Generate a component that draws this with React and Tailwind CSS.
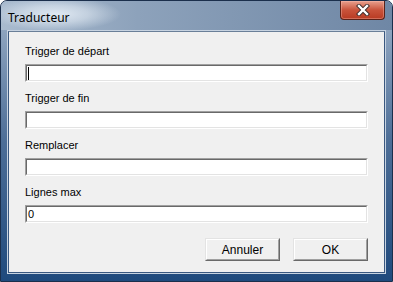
const fields = [
  { label: "Trigger de départ", value: "", focused: true },
  { label: "Trigger de fin", value: "" },
  { label: "Remplacer", value: "" },
  { label: "Lignes max", value: "0" },
];

const Field = ({ label, value, focused }) => (
  <div className="flex flex-col">
    <label className="h-[13px] leading-[13px] text-[11px] text-black">{label}</label>
    {/* sunken edit box */}
    <div className="mt-[6px] h-[18px] border border-t-[#a0a0a0] border-l-[#a0a0a0] border-r-white border-b-white">
      <div className="h-full border border-t-[#696969] border-l-[#696969] border-r-[#e3e3e3] border-b-[#e3e3e3] bg-white flex items-center pl-[1px]">
        {focused && <div className="w-px h-[13px] bg-black" />}
        {value && <span className="text-[11px] leading-[13px] text-black">{value}</span>}
      </div>
    </div>
  </div>
);

const Button = ({ children }) => (
  <button className="w-[75px] h-[23px] border border-t-[#e3e3e3] border-l-[#e3e3e3] border-r-[#696969] border-b-[#696969] bg-[#f0f0f0]">
    <div className="h-full border border-t-white border-l-white border-r-[#a0a0a0] border-b-[#a0a0a0] flex items-center justify-center text-[12px] text-black">
      {children}
    </div>
  </button>
);

const CloseButton = () => (
  <div className="w-[45px] h-[19px] rounded-b-[4px] border border-t-0 border-[#5a2219] bg-gradient-to-b from-[#e8a08e] via-[#c9533b] to-[#b83a22] flex items-center justify-center shadow-[inset_0_0_0_1px_rgba(255,200,190,0.35)]">
    <svg width="14" height="12" viewBox="0 0 14 12">
      <path d="M3 2 L11 10 M11 2 L3 10" stroke="#3a2a2a" strokeWidth="4.2" strokeLinecap="square" />
      <path d="M3 2 L11 10 M11 2 L3 10" stroke="#ffffff" strokeWidth="2.4" strokeLinecap="square" />
    </svg>
  </div>
);

const App = () => {
  return (
    <div
      className="w-[393px] h-[282px] rounded-t-[7px] border border-[#1b2f4c] bg-gradient-to-b from-[#9fb2c9] via-[#4d6e97] to-[#1f4a7d] flex flex-col overflow-hidden"
      style={{ fontFamily: '"Liberation Sans", Arial, sans-serif' }}
    >
      {/* TITLE BAR */}
      <div className="h-[29px] flex items-start bg-[linear-gradient(90deg,#a9bbcf_0%,#8da2bb_35%,#6f87a5_100%)]">
        <div className="relative pl-[7px] pt-[4px]">
          <div className="absolute -left-[10px] -top-[4px] w-[130px] h-[34px] bg-[radial-gradient(closest-side,rgba(230,238,246,0.9)_0%,rgba(230,238,246,0.55)_50%,rgba(230,238,246,0)_100%)]" />
          <span
            className="relative text-[12px] text-black"
            style={{ fontFamily: '"Noto Sans", "Open Sans", sans-serif' }}
          >
            Traducteur
          </span>
        </div>
        <div className="ml-auto mr-[7px]">
          <CloseButton />
        </div>
      </div>

      {/* CLIENT AREA */}
      <div className="flex-1 mx-[6px] mb-[7px] border border-[#c7d3e1]">
        <div className="h-full border border-[#3a5880] border-t-[#6a7f98] bg-[#f0f0f0] flex flex-col px-[16px] pt-[13px]">
          <div className="flex flex-col gap-[10px]">
            {fields.map((f) => (
              <Field key={f.label} {...f} />
            ))}
          </div>
          <div className="flex justify-end gap-[13px] mt-[15px]">
            <Button>Annuler</Button>
            <Button>OK</Button>
          </div>
        </div>
      </div>
    </div>
  );
};

export default App;
